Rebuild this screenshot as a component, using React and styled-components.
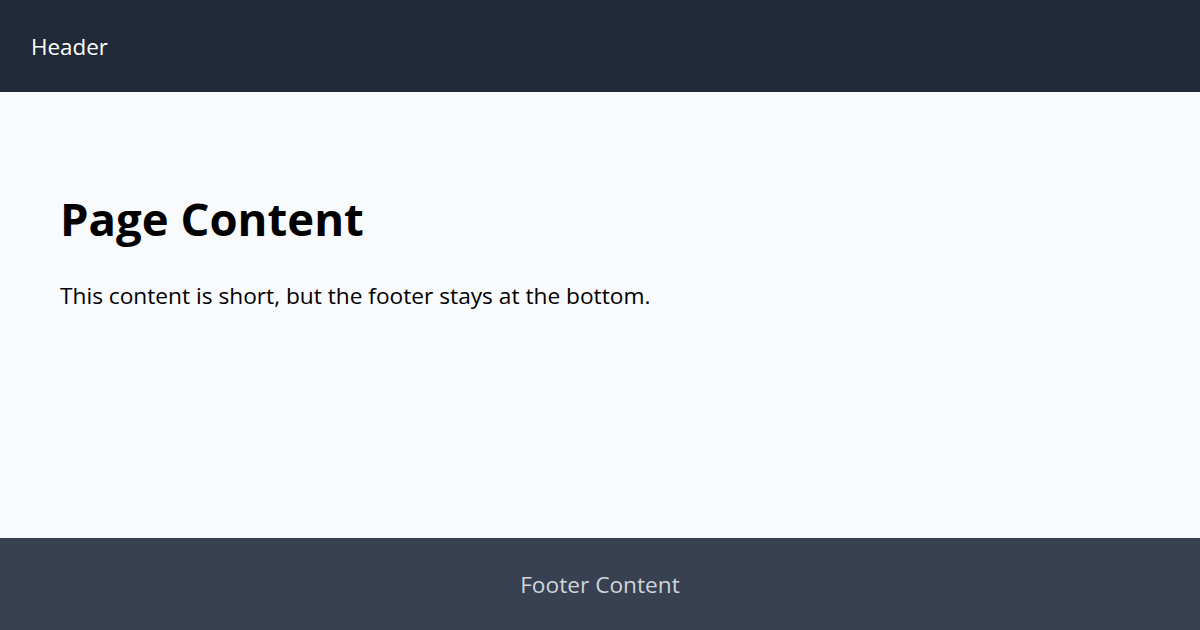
import React from "react";
import styled, { createGlobalStyle } from "styled-components";

const Global = createGlobalStyle`
  html, body { margin: 0; padding: 0; height: 100%; }
  body { font-family: "Segoe UI", "Open Sans", "Noto Sans", sans-serif; background: #f8fafc; }
  #root { min-height: 100%; }
`;

const Layout = styled.div`
  display: flex;
  flex-direction: column;
  min-height: 630px;
`;

const Header = styled.header`
  background: #1f2937;
  color: #ffffff;
  height: 92px;
  display: flex;
  align-items: center;
  padding: 0 31px;
  font-size: 22.4px;
  box-sizing: border-box;
`;

const Main = styled.main`
  flex: 1;
  background: #f8fafc;
  padding: 60px 60px;
`;

const Title = styled.h1`
  font-size: 45.5px;
  font-weight: 700;
  color: #000;
  margin: 35px 0 31px;
`;

const Text = styled.p`
  font-size: 22.7px;
  color: #000;
  margin: 0;
`;

const Footer = styled.footer`
  background: #374151;
  color: #d1d5db;
  height: 92px;
  display: flex;
  align-items: center;
  justify-content: center;
  font-size: 22.7px;
`;

export default function App() {
  return (
    <>
      <Global />
      <Layout>
        <Header>Header</Header>
        <Main>
          <Title>Page Content</Title>
          <Text>This content is short, but the footer stays at the bottom.</Text>
        </Main>
        <Footer>Footer Content</Footer>
      </Layout>
    </>
  );
}
